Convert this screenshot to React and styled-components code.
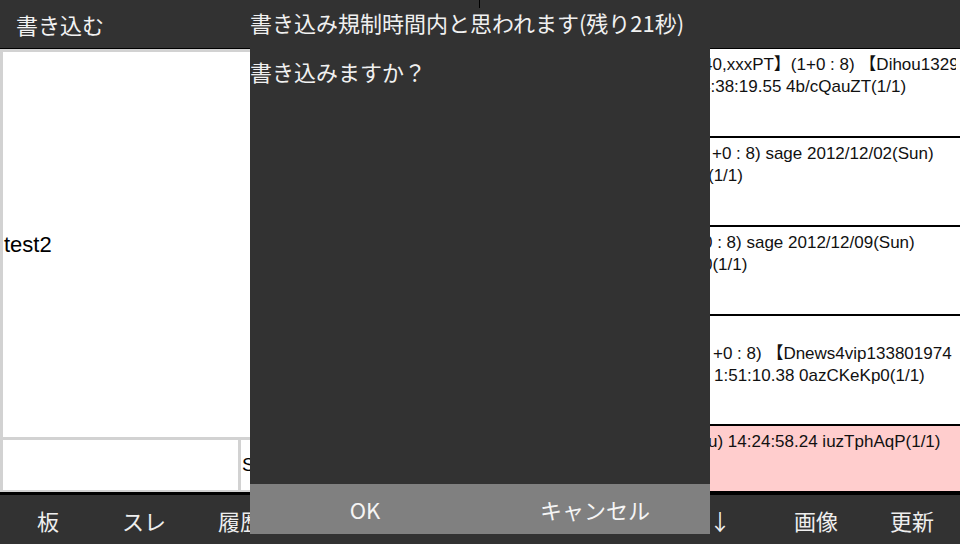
import React from "react";
import styled, { createGlobalStyle } from "styled-components";

const GlobalStyle = createGlobalStyle`
  html, body {
    margin: 0;
    padding: 0;
    background: #323232;
  }
  body {
    font-family: "Liberation Sans", "Noto Sans CJK JP", sans-serif;
  }
  #root {
    width: 960px;
    height: 544px;
    overflow: hidden;
  }
`;

const jp = `"Noto Sans CJK JP", "Liberation Sans", sans-serif`;

const Screen = styled.div`
  position: relative;
  width: 960px;
  height: 544px;
  display: flex;
  flex-direction: column;
  background: #323232;
`;

const TopBar = styled.div`
  height: 48px;
  border-bottom: 1px solid #000;
  display: flex;
  align-items: center;
  padding-left: 16px;
  font-family: ${jp};
  font-size: 22px;
  color: #f2f2f2;
`;

const Main = styled.div`
  flex: 1;
  display: grid;
  grid-template-columns: 480px 480px;
  min-height: 0;
`;

const FormPane = styled.div`
  background: #d2d2d2;
  padding: 3px 0 2px 3px;
  display: flex;
  flex-direction: column;
  gap: 3px;
`;

const Editor = styled.div`
  flex: 1;
  background: #fff;
  display: flex;
  align-items: center;
  padding-left: 1px;
  font-size: 22px;
  color: #000;
`;

const FormRow = styled.div`
  height: 50px;
  display: grid;
  grid-template-columns: 235px 1fr;
  gap: 3px;
`;

const Field = styled.div`
  background: #fff;
  display: flex;
  align-items: center;
  padding-left: 1px;
  font-size: 19px;
  color: #000;
`;

const ThreadList = styled.div`
  background: #fff;
  overflow: hidden;
  display: flex;
  flex-direction: column;
`;

const Thread = styled.div`
  flex: none;
  background: ${(p) => (p.$unread ? "#ffcdcd" : "#fff")};
  border-bottom: 2px solid #000;
  padding: 5px 4px ${(p) => p.$bottom}px;
  font-size: 17px;
  line-height: 22px;
  color: #111;
  overflow: hidden;
`;

const Line = styled.div`
  height: 22px;
  white-space: nowrap;
  overflow: hidden;
`;

const Lead = styled.span`
  display: inline-block;
  vertical-align: top;
  overflow: hidden;
  white-space: nowrap;
`;

const ToolBar = styled.div`
  height: 49px;
  border-top: 3px solid #000;
  display: grid;
  grid-template-columns: repeat(10, 96px);
`;

const Tab = styled.div`
  display: flex;
  align-items: center;
  justify-content: center;
  font-family: ${jp};
  font-size: 22px;
  color: #eeeeee;
`;

const Dialog = styled.div`
  position: absolute;
  left: 250px;
  top: 0;
  width: 460px;
  height: 534px;
  background: #323232;
  display: flex;
  flex-direction: column;
  font-family: ${jp};
  color: #f0f0f0;
`;

const Notch = styled.div`
  position: absolute;
  left: 229px;
  top: 0;
  width: 1px;
  height: 8px;
  background: #000;
`;

const DialogTitle = styled.div`
  height: 44px;
  line-height: 44px;
  font-size: 22px;
  white-space: nowrap;
`;

const DialogMessage = styled.div`
  flex: 1;
  padding-top: 16px;
  line-height: 22px;
  font-size: 22px;
`;

const ButtonRow = styled.div`
  height: 50px;
  display: grid;
  grid-template-columns: 1fr 1fr;
  background: #808080;
`;

const DialogButton = styled.button`
  border: none;
  background: transparent;
  padding: 0;
  font-family: ${jp};
  font-size: 22px;
  color: #f5f5f5;
`;

const threads = [
  {
    bottom: 16,
    lines: [
      { lead: 219, pre: "【冬のボーナス】1", text: "40,xxxPT】(1+0 : 8) 【Dihou1329" },
      { lead: 217, pre: "6301800】 2012/11/25 1", text: "4:38:19.55 4b/cQauZT(1/1)" },
      { lead: 200, pre: "", text: "" },
    ],
  },
  {
    bottom: 16,
    lines: [
      { lead: 228, pre: "テストスレッドその二 (1", text: "+0 : 8) sage 2012/12/02(Sun)" },
      { lead: 224, pre: "09:12:44.10 Yx3kPqWm0", text: "(1/1)" },
      { lead: 200, pre: "", text: "" },
    ],
  },
  {
    bottom: 16,
    lines: [
      { lead: 219, pre: "テストスレッドその三 (1+", text: "0 : 8) sage 2012/12/09(Sun)" },
      { lead: 219, pre: "21:03:57.66 Rt8vNc2L", text: "0(1/1)" },
      { lead: 200, pre: "", text: "" },
    ],
  },
  {
    bottom: 15,
    lines: [
      { lead: 200, pre: "【速報】ニュース速報VIPより", text: "" },
      { lead: 229, pre: "転載のスレッドです (1", text: "+0 : 8) 【Dnews4vip133801974" },
      { lead: 230, pre: "8】 2012/05/29(Tue) 1", text: "1:51:10.38 0azCKeKp0(1/1)" },
      { lead: 200, pre: "", text: "" },
    ],
  },
  {
    bottom: 16,
    unread: true,
    lines: [
      { lead: 224, pre: "名無し 2012/12/13(Th", text: "u) 14:24:58.24 iuzTphAqP(1/1)" },
      { lead: 200, pre: "", text: "" },
    ],
  },
];

const tabs = ["板", "スレ", "履歴", "検索", "書込", "設定", "↑", "↓", "画像", "更新"];

function App() {
  return (
    <Screen>
      <GlobalStyle />
      <TopBar>書き込む</TopBar>
      <Main>
        <FormPane>
          <Editor>test2</Editor>
          <FormRow>
            <Field />
            <Field>Sage</Field>
          </FormRow>
        </FormPane>
        <ThreadList>
          {threads.map((t, i) => (
            <Thread key={i} $unread={t.unread} $bottom={t.bottom}>
              {t.lines.map((l, j) => (
                <Line key={j}>
                  <Lead style={{ width: l.lead }}>{l.pre}</Lead>
                  {l.text}
                </Line>
              ))}
            </Thread>
          ))}
        </ThreadList>
      </Main>
      <ToolBar>
        {tabs.map((t) => (
          <Tab key={t}>{t}</Tab>
        ))}
      </ToolBar>
      <Dialog>
        <Notch />
        <DialogTitle>書き込み規制時間内と思われます(残り21秒)</DialogTitle>
        <DialogMessage>書き込みますか？</DialogMessage>
        <ButtonRow>
          <DialogButton>OK</DialogButton>
          <DialogButton>キャンセル</DialogButton>
        </ButtonRow>
      </Dialog>
    </Screen>
  );
}

export default App;
